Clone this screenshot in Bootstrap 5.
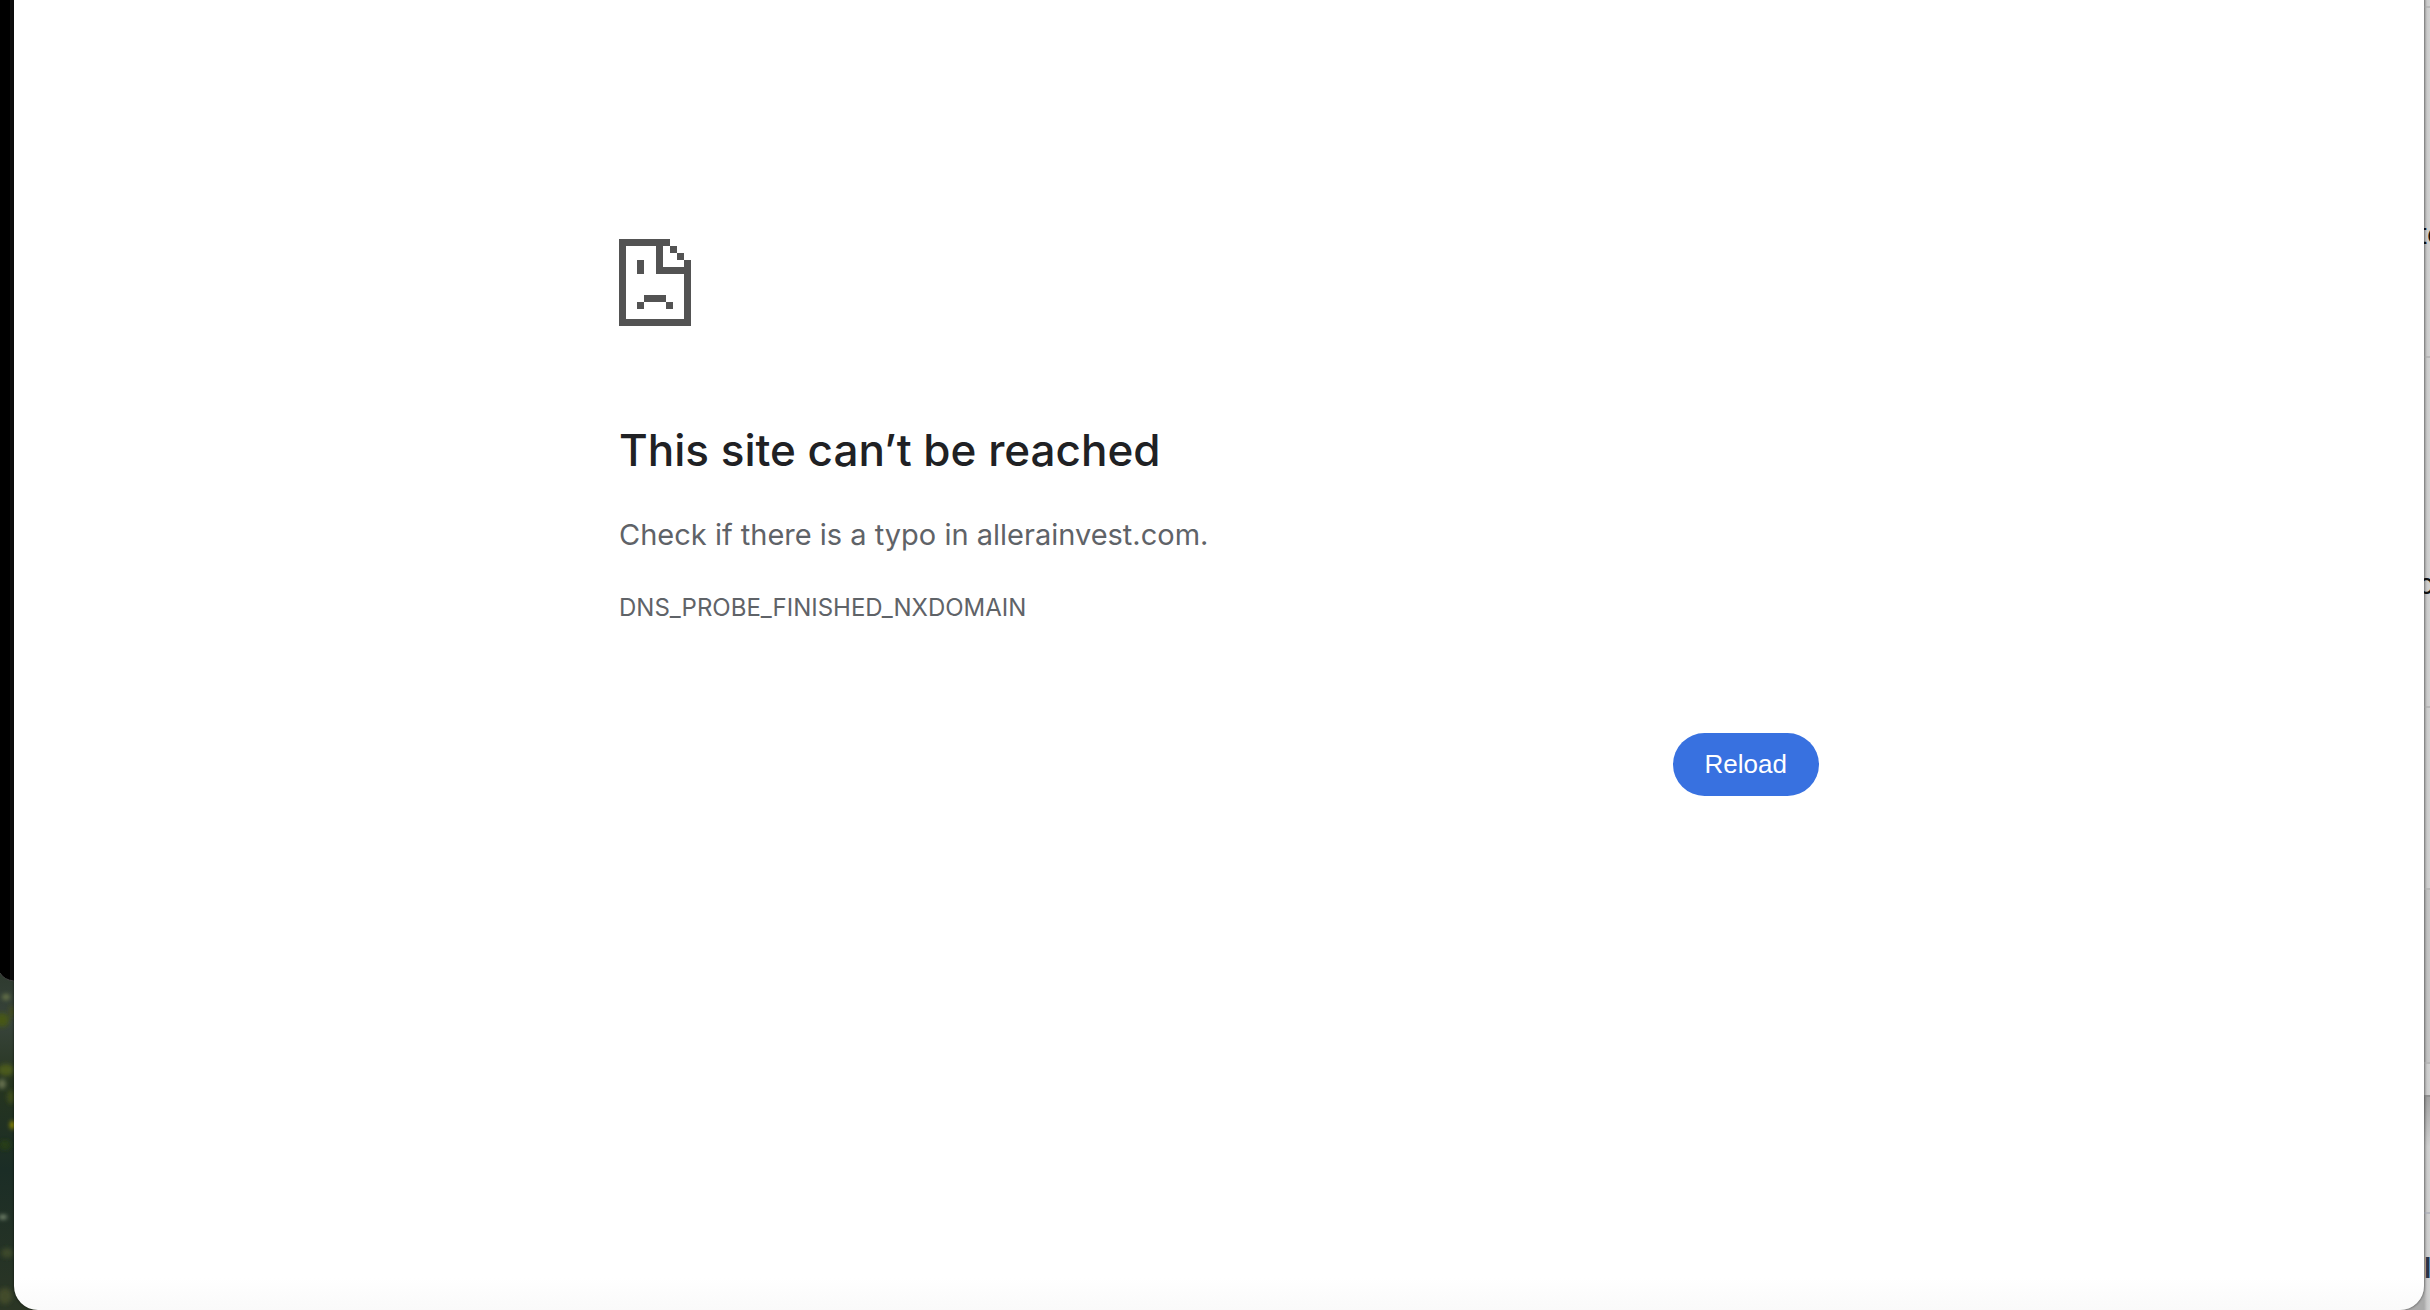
<!DOCTYPE html>
<html lang="en">
<head>
<meta charset="utf-8">
<meta name="viewport" content="width=device-width, initial-scale=1">
<title>allerainvest.com</title>
<link href="https://cdn.jsdelivr.net/npm/bootstrap@5.3.0/dist/css/bootstrap.min.css" rel="stylesheet">
<style>
  body { font-family: Inter, "Liberation Sans", sans-serif; background: #cfcfcf; }
  .desktop-left { width: 38px; margin-right: -24px; }
  .error-window {
    min-width: 0; z-index: 1; border-radius: 0 0 24px 24px;
    background: linear-gradient(to top, #fafafa, #fff 32px);
    box-shadow: 0 0 2px 1px rgba(0, 0, 0, .3);
  }
  .error-body { max-width: 1200px; padding-top: 239px; color: #5f6368; }
  .sad-page { width: 72px; height: 87px; fill: #535353; }
  .error-body h1 { margin-top: 94px; font-size: 44px; line-height: 60px; font-weight: 500; color: #202124; }
  .summary { margin-top: 32px; font-size: 29px; line-height: 46px; }
  .error-code { margin-top: 32px; font-size: 24px; line-height: 36px; }
  .reload {
    margin-top: 107px; padding: 0 32px; height: 63px; border: 0;
    background: #3871e0; color: #fff; font: 26px "Liberation Sans", Arial, sans-serif;
  }
  .reload:hover { background: #2c63cf; color: #fff; }
  .behind-right { width: 30px; margin-left: -24px; background: linear-gradient(to right, #aaa 24px, #cacaca 27px, #d3d3d3); }
  .list-line { height: 350px; padding: 212px 0 0 24px; border-bottom: 2px solid #b8b8b8; font-size: 28px; line-height: 28px; color: #111; white-space: nowrap; }
  .first-line { height: 8px; padding: 0; }
  .medium-line { height: 182px; padding: 0; }
  .shaded-line { height: 174px; padding: 0; background: rgba(0, 0, 0, .05); }
  .thin-line { height: 33px; padding: 0; border-color: #909090; }
  .faded-line { height: 117px; padding: 0; border-color: #b6b8bf; background: linear-gradient(rgba(0, 0, 0, .22), transparent 50px); }
  .last-line { height: auto; padding-top: 40px; border: 0; color: #293347; font-weight: 600; }
  .cut-text { text-indent: -6px; }
</style>
</head>
<body>
<div class="d-flex vh-100 overflow-hidden">
  <div class="desktop-left flex-shrink-0" aria-hidden="true">
    <svg class="d-block w-100 h-100" preserveAspectRatio="none" viewBox="0 0 38 1310">
      <defs>
        <linearGradient id="leaves" x2="0" y2="1">
          <stop offset="0" stop-color="#2b372b"/><stop offset=".18" stop-color="#38443b"/>
          <stop offset=".35" stop-color="#26351f"/><stop offset=".6" stop-color="#1b2d26"/>
          <stop offset="1" stop-color="#2b3625"/>
        </linearGradient>
        <filter id="soft"><feGaussianBlur stdDeviation="2"/></filter>
      </defs>
      <rect y="960" width="38" height="350" fill="url(#leaves)"/>
      <g filter="url(#soft)">
        <ellipse cx="6" cy="997" rx="4" ry="3" fill="#69754a"/>
        <ellipse cx="2" cy="1020" rx="7" ry="7" fill="#475713"/>
        <ellipse cx="12" cy="1012" rx="3" ry="6" fill="#424c1d"/>
        <ellipse cx="6" cy="1070" rx="8" ry="6" fill="#4b5a1d"/>
        <ellipse cx="2" cy="1084" rx="4" ry="5" fill="#667150"/>
        <ellipse cx="11" cy="1097" rx="4" ry="7" fill="#3e4b1a"/>
        <ellipse cx="13" cy="1125" rx="3" ry="4" fill="#999406"/>
        <ellipse cx="5" cy="1145" rx="6" ry="5" fill="#263c17"/>
        <ellipse cx="3" cy="1217" rx="4" ry="2" fill="#8b9b80"/>
        <ellipse cx="7" cy="1253" rx="6" ry="5" fill="#3d492a"/>
        <ellipse cx="5" cy="1296" rx="7" ry="8" fill="#424c2a"/>
      </g>
      <path d="M0 0H38V981H14Q4 980 0 973Z" fill="#000"/>
      <path d="M10 0H14V980H10Z" fill="#0e0e0e"/>
      <path d="M0 973Q4 980 14 981" fill="none" stroke="#444"/>
    </svg>
  </div>

  <main class="error-window flex-grow-1 px-3">
    <div class="error-body mx-auto d-flex flex-column">
      <svg class="sad-page" viewBox="0 0 72 87" shape-rendering="crispEdges" aria-hidden="true">
        <path d="M0 0H51V7H44V28H65V21H72V87H0ZM7 7V80H65V35H37V7Z" fill-rule="evenodd"/>
        <path d="M51 7H58V14H51ZM58 14H65V21H58ZM18 21H25V35H18ZM25 56H47V63H25ZM18 63H25V70H18ZM47 63H54V70H47Z"/>
      </svg>
      <h1 class="mb-0">This site can’t be reached</h1>
      <p class="summary mb-0">Check if there is a typo in allerainvest.com.</p>
      <div class="error-code">DNS_PROBE_FINISHED_NXDOMAIN</div>
      <button type="button" class="reload btn rounded-pill align-self-end">Reload</button>
    </div>
  </main>

  <div class="behind-right flex-shrink-0 overflow-hidden" aria-hidden="true">
    <div class="list-line first-line"></div>
    <div class="list-line cut-text">te</div>
    <div class="list-line cut-text">o</div>
    <div class="list-line medium-line"></div>
    <div class="list-line shaded-line"></div>
    <div class="list-line thin-line"></div>
    <div class="list-line faded-line"></div>
    <div class="list-line last-line">l</div>
  </div>
</div>
<script src="https://cdn.jsdelivr.net/npm/bootstrap@5.3.0/dist/js/bootstrap.bundle.min.js"></script>
</body>
</html>
